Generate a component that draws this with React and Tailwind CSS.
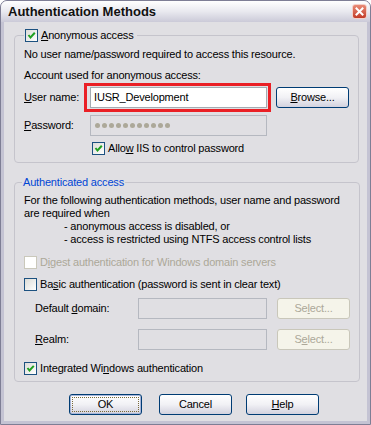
import React from "react"

const font = "font-['Liberation_Sans',Arial,sans-serif]"

function Check({ checked, disabled }) {
    return (
        <span className={"inline-flex w-[13px] h-[13px] shrink-0 items-center justify-center border " + (disabled ? "border-[#cac8bb] bg-white" : "border-[#1c5180] bg-gradient-to-br from-[#dcdcd7] to-white")}>
            {checked && (
                <svg width="9" height="9" viewBox="0 0 9 9">
                    <path d="M1.5 4 L3.5 6.5 L7.8 1.8" stroke="#21a121" strokeWidth="2" fill="none" />
                </svg>
            )}
        </span>
    )
}

function Btn({ children, disabled, isDefault }) {
    if (disabled) {
        return (
            <button className="w-[73px] h-[21px] shrink-0 rounded-[3px] border border-[#c9c7ba] bg-[#f5f4ea] text-[#aca899] text-[11px] leading-none flex items-center justify-center">
                {children}
            </button>
        )
    }
    return (
        <button className={"w-[73px] h-[21px] shrink-0 rounded-[3px] border border-[#003c74] bg-gradient-to-b from-white via-[#f1f1f5] to-[#d3d2de] text-black text-[11px] leading-none flex items-center justify-center p-[2px] " + (isDefault ? "shadow-[inset_0_0_0_1px_#a8b6d8]" : "")}>
            <span className={"w-full h-full flex items-center justify-center " + (isDefault ? "border border-dotted border-[#7a6a3a]" : "")}>
                {children}
            </span>
        </button>
    )
}

function U({ children }) {
    return <span className="underline underline-offset-[1px]">{children}</span>
}

export default function App() {
    return (
        <div className={"w-[371px] h-[425px] bg-[#c4c3d3] border border-[#7e7e95] rounded-t-[7px] flex flex-col overflow-hidden text-[11px] tracking-[-0.18px] whitespace-nowrap text-black " + font}>

            <div className="h-[21px] shrink-0 flex items-center justify-between pl-[7px] pr-[3px] bg-gradient-to-b from-white via-[#e9e9ef] to-[#cbcad8]">
                <span className="text-[13px] font-bold leading-none tracking-normal text-[#111]">Authentication Methods</span>
                <span className="w-[15px] h-[15px] rounded-[3px] border border-[#f4d0c8] bg-gradient-to-b from-[#e88a76] to-[#c23a26] flex items-center justify-center">
                    <svg width="9" height="9" viewBox="0 0 9 9">
                        <path d="M1.5 1.5 L7.5 7.5 M7.5 1.5 L1.5 7.5" stroke="white" strokeWidth="2" strokeLinecap="square" />
                    </svg>
                </span>
            </div>

            <div className="flex-1 mx-[3px] mb-[3px] bg-[#e0dfe3] pt-[7px]">

                <fieldset className="ml-[10px] w-[345px] border border-[#c5c4cc] rounded-[4px] px-[9px] pb-[7px]">
                    <legend className="pl-[1px] pr-[3px] flex items-center gap-[3px] leading-[13px]">
                        <Check checked />
                        <span><U>A</U>nonymous access</span>
                    </legend>

                    <p className="mt-[6px] leading-[13px]">No user name/password required to access this resource.</p>
                    <p className="mt-[8px] leading-[13px]">Account used for anonymous access:</p>

                    <div className="mt-[1px] flex items-center">
                        <span className="w-[60px] shrink-0"><U>U</U>ser name:</span>
                        <div className="w-[187px] h-[29px] shrink-0 border-[3px] border-[#ea1f25] pl-[3px] pr-[1px] py-[1px]">
                            <div className="h-full border border-[#a5acb2] bg-white px-[3px] flex items-center">IUSR_Development</div>
                        </div>
                        <div className="ml-[5px]">
                            <Btn><span><U>B</U>rowse...</span></Btn>
                        </div>
                    </div>

                    <div className="mt-[3px] flex items-center">
                        <span className="w-[66px] shrink-0"><U>P</U>assword:</span>
                        <div className="w-[177px] h-[21px] border border-[#b5b8c0] bg-[#e0dfe3] px-[4px] flex items-center gap-[2px]">
                            {Array.from({ length: 11 }).map((_, i) => (
                                <span key={i} className="w-[5px] h-[5px] rounded-full bg-[#aca899]" />
                            ))}
                        </div>
                    </div>

                    <div className="mt-[6px] pl-[68px] flex items-center gap-[3px] leading-[13px]">
                        <Check checked />
                        <span>Allo<U>w</U> IIS to control password</span>
                    </div>
                </fieldset>

                <fieldset className="mt-[13px] ml-[10px] w-[345px] border border-[#c5c4cc] rounded-[4px] px-[9px] pb-[6px]">
                    <legend className="-ml-[2px] px-[1px] leading-[13px] text-[#0046d5]">Authenticated access</legend>

                    <div className="mt-[5px] leading-[13px]">
                        <p>For the following authentication methods, user name and password</p>
                        <p>are required when</p>
                        <p className="pl-[40px]">- anonymous access is disabled, or</p>
                        <p className="pl-[40px]">- access is restricted using NTFS access control lists</p>
                    </div>

                    <div className="mt-[10px] flex items-center gap-[3px] leading-[13px] text-[#aca899]">
                        <Check disabled />
                        <span>D<U>i</U>gest authentication for Windows domain servers</span>
                    </div>

                    <div className="mt-[9px] flex items-center gap-[3px] leading-[13px]">
                        <Check />
                        <span>Ba<U>s</U>ic authentication (password is sent in clear text)</span>
                    </div>

                    <div className="mt-[7px] flex items-center">
                        <span className="w-[114px] pl-[11px] shrink-0">Default <U>d</U>omain:</span>
                        <div className="w-[129px] h-[21px] shrink-0 border border-[#b5b8c0] bg-[#e0dfe3]" />
                        <div className="ml-[10px]">
                            <Btn disabled><span>Se<U>l</U>ect...</span></Btn>
                        </div>
                    </div>

                    <div className="mt-[10px] flex items-center">
                        <span className="w-[114px] pl-[11px] shrink-0"><U>R</U>ealm:</span>
                        <div className="w-[129px] h-[21px] shrink-0 border border-[#b5b8c0] bg-[#e0dfe3]" />
                        <div className="ml-[10px]">
                            <Btn disabled><span>S<U>e</U>lect...</span></Btn>
                        </div>
                    </div>

                    <div className="mt-[12px] flex items-center gap-[3px] leading-[13px]">
                        <Check checked />
                        <span>Integrated Wi<U>n</U>dows authentication</span>
                    </div>
                </fieldset>

                <div className="mt-[12px] pl-[65px] flex items-center">
                    <Btn isDefault>OK</Btn>
                    <div className="ml-[17px]"><Btn>Cancel</Btn></div>
                    <div className="ml-[14px]"><Btn><span><U>H</U>elp</span></Btn></div>
                </div>
            </div>
        </div>
    )
}
